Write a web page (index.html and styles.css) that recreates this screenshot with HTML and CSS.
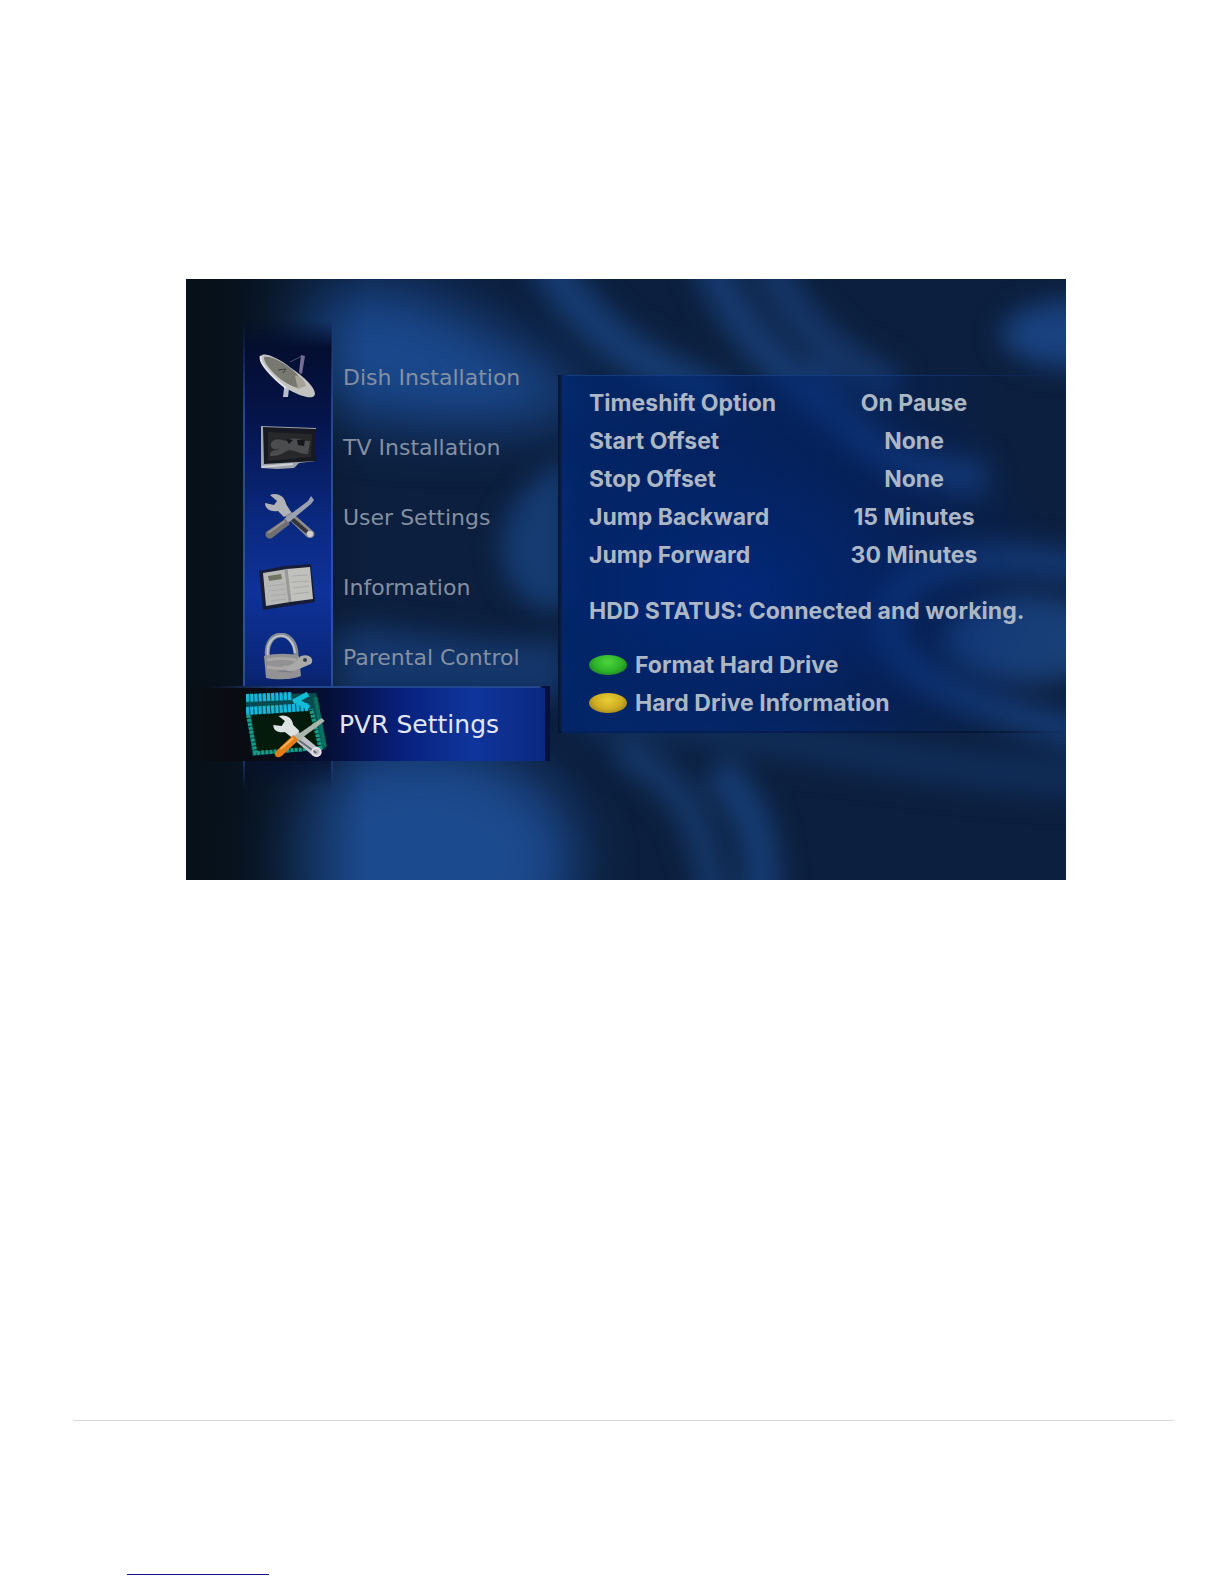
FILE: index.html
```html
<!DOCTYPE html>
<html lang="en">
<head>
    <meta charset="UTF-8">
    <meta name="viewport" content="width=device-width, initial-scale=1.0">
    <title>PVR Settings</title>
    <link rel="stylesheet" href="styles.css">
</head>
<body>
<main class="screen">
    <svg class="backdrop" viewBox="0 0 880 601" preserveAspectRatio="none" aria-hidden="true">
        <defs>
            <filter id="soft" x="-50%" y="-50%" width="200%" height="200%" color-interpolation-filters="sRGB"><feGaussianBlur stdDeviation="13"/></filter>
            <filter id="wide" x="-50%" y="-50%" width="200%" height="200%" color-interpolation-filters="sRGB"><feGaussianBlur stdDeviation="28"/></filter>
            <linearGradient id="shade">
                <stop offset="0" stop-color="#071017"/>
                <stop offset=".3" stop-color="#07111b" stop-opacity=".9"/>
                <stop offset="1" stop-color="#07111f" stop-opacity="0"/>
            </linearGradient>
        </defs>
        <rect width="880" height="601" fill="#0c1f3e"/>
        <!-- big glows -->
        <path d="M90 10H220C290 40 350 70 410 130C310 155 200 150 110 120Z" fill="#1a488c" filter="url(#wide)"/>
        <ellipse cx="235" cy="580" rx="155" ry="115" fill="#1c4a8e" filter="url(#wide)"/>
        <path d="M385 180C310 210 290 290 350 330H385Z" fill="#153b72" filter="url(#soft)"/>
        <path d="M140 350C220 340 280 370 380 360V420H140Z" fill="#14366a" filter="url(#soft)"/>
        <ellipse cx="890" cy="55" rx="75" ry="34" fill="#19427f" filter="url(#soft)"/>
        <!-- top streaks -->
        <g fill="none" filter="url(#soft)">
            <path d="M355-30C390 40 450 90 540 120" stroke="#163c72" stroke-width="40"/>
            <path d="M520-30C540 30 570 70 640 130" stroke="#163b70" stroke-width="36"/>
            <path d="M580-30C600 40 650 80 710 110" stroke="#153668" stroke-width="36"/>
            <path d="M620 90C660 160 700 190 800 200" stroke="#173c76" stroke-width="34"/>
        </g>
        <!-- lower swirls -->
        <g fill="none" filter="url(#soft)">
            <path d="M900 290C790 270 710 280 700 345C705 400 800 430 900 455" stroke="#153a73" stroke-width="32"/>
            <path d="M390 440C560 440 700 490 900 500" stroke="#102c57" stroke-width="40"/>
            <path d="M430 470C500 500 520 550 530 630" stroke="#15386a" stroke-width="30"/>
            <path d="M530 490C570 530 580 570 575 630" stroke="#163d74" stroke-width="36"/>
        </g>
        <ellipse cx="840" cy="360" rx="85" ry="44" fill="#1a4078" filter="url(#soft)"/>
        <rect width="180" height="601" fill="url(#shade)"/>
    </svg>

    <nav class="menu">
        <a class="menu-item" href="#">
            <span class="menu-icon">
                <svg width="60" height="48" viewBox="0 0 60 48">
                    <path d="M27 27l-2 17h5l2-17z" fill="#b9bfca"/>
                    <path d="M32 9l12-6-2 19" fill="none" stroke="#4d4a66" stroke-width="1"/>
                    <path d="M43 2l4 1-3 18-3-2z" fill="#756d94"/>
                    <path d="M3 3c-3 6 11 21 25 32 13 8 28 13 29 6 0-6-9-16-24-26C18 3 5-1 3 3z" fill="#c2c2c1"/>
                    <path d="M6 4c7-2 23 7 33 17 5 5 6 12 2 14C26 33 5 12 6 4z" fill="#777970"/>
                    <path d="M3 3c-3 6 11 21 25 32" fill="none" stroke="#e2e4e7" stroke-width="2"/>
                    <path d="M20 17l8-1-3 4" fill="none" stroke="#3d4143" stroke-width="1"/>
                    <path d="M37 23c4-2 9 4 11 10l-8 3z" fill="#a6a297"/>
                </svg>
            </span>
            Dish Installation
        </a>
        <a class="menu-item" href="#">
            <span class="menu-icon">
                <svg width="60" height="48" viewBox="0 0 60 48">
                    <path d="M3 3l55 2v33l-17 2-5 5-17 1-16-1z" fill="#9fa3ac"/>
                    <path d="M5 4l53 2v32L6 41z" fill="#171a20"/>
                    <path d="M10 9l44 2-1 23-43 4z" fill="#26282a"/>
                    <path d="M12 33c0-8 7-4 9-8-5 3-9 0-8-5 6-8 13 0 18-3 6-4 14 2 21 1l-2 13c-10 1-16-7-23-2-5 3-8 4-15 4z" fill="#4b4d4f"/>
                    <path d="M28 16l7 1-4 4zM39 17h8l-1 6-6-1z" fill="#15171c"/>
                    <path d="M4 4v40" stroke="#a2a9b7" stroke-width="2"/>
                    <path d="M4 44l31-3" stroke="#d0d2d6" stroke-width="2"/>
                </svg>
            </span>
            TV Installation
        </a>
        <a class="menu-item" href="#">
            <span class="menu-icon">
                <svg width="60" height="48" viewBox="0 0 60 48">
                    <path d="M25 21l6-4 25 22c2 4-3 8-7 5z" fill="#8d8d91"/>
                    <path d="M34 26l15 13" stroke="#34353a" stroke-width="4"/>
                    <path d="M12 2c8-3 15 2 16 9l5 8-7 5-6-6c-6 1-13-1-13-8l9 2 3-4z" fill="#b0b2b8"/>
                    <path d="M53 3l3 4-3 4-23 19-4-4L50 8z" fill="#9ba0b0"/>
                    <path d="M27 26l5 5-18 14c-4 2-8-2-6-6z" fill="#706f72"/>
                    <path d="M10 40l17-12" stroke="#98948f" stroke-width="2"/>
                    <circle cx="52" cy="41" r="3" fill="#d0d0d0"/>
                </svg>
            </span>
            User Settings
        </a>
        <a class="menu-item" href="#">
            <span class="menu-icon">
                <svg width="60" height="48" viewBox="0 0 60 48">
                    <path d="M1 8l26-5 26-2 4 38-26 4-26 4z" fill="#171d36"/>
                    <path d="M5 10l24-4 3 33-24 4z" fill="#b8b9b7"/>
                    <path d="M29 6l23-2 3 32-23 3z" fill="#c0c0bd"/>
                    <path d="M28 6l4 33" stroke="#999" stroke-width="3"/>
                    <path d="M10 13l13-2 1 5-13 2z" fill="#707462"/>
                    <path d="M10 23l17-2M11 28l17-2M12 33l16-2M13 38l15-2M34 13l16-1M34 19l17-1M35 25l16-2M36 31l15-2" stroke="#a8a9aa"/>
                </svg>
            </span>
            Information
        </a>
        <a class="menu-item" href="#">
            <span class="menu-icon">
                <svg width="60" height="48" viewBox="0 0 60 48">
                    <path d="M10 26C4-4 39-7 38 24" fill="none" stroke="#858b95" stroke-width="5"/>
                    <path d="M10 24C6-2 35-5 37 20" fill="none" stroke="#bfc4ca" stroke-width="2"/>
                    <path d="M6 23c11-3 27-3 35 0l2 20c-9 4-26 4-35 2z" fill="#929193"/>
                    <path d="M9 27c10-2 20-2 29 0M9 34c10 2 17 2 26 0" fill="none" stroke="#a9a6a5" stroke-width="3"/>
                    <path d="M25 33c11 1 13-7 18-10 8-3 14 3 10 8-6 2-16 8-23 7z" fill="#aaa9aa"/>
                    <circle cx="47" cy="27" r="2" fill="#353b4d"/>
                    <path d="M20 38l15 1" stroke="#7a7a84"/>
                </svg>
            </span>
            Parental Control
        </a>
        <a class="menu-item selected" href="#">
            <span class="menu-icon">
                <svg width="84" height="66" viewBox="2 0 80 66" preserveAspectRatio="none">
                    <path d="M1 3l68-2 9 56-70 7z" fill="#064b4d"/>
                    <path d="M7 23l58-5 7 38-61 4z" fill="#041b0c"/>
                    <path d="M4 23l7 38 62-5-9-39" fill="none" stroke="#159b87" stroke-width="4" stroke-dasharray="3 1"/>
                    <path d="M2 6l44-2M2 19l60-4" stroke="#16b6dc" stroke-width="8" stroke-dasharray="3 1"/>
                    <path d="M47 10l14-8M49 8l13 8" stroke="#13bdd7" stroke-width="5"/>
                    <path d="M68 5l9 50" stroke="#08705f" stroke-width="4"/>
                    <path d="M37 38l6-6 30 26c3 5-3 9-8 5z" fill="#bfc0c7"/>
                    <path d="M52 48l17 13" stroke="#667071" stroke-width="2"/>
                    <path d="M33 24c8-2 13 2 14 9l6 6-7 6-7-5c-6 1-11-1-11-7l8 1 3-5z" fill="#dce2e2"/>
                    <path d="M74 26l3 3-28 22-4-4z" fill="#aab5aa"/>
                    <path d="M47 43l5 5-16 16c-4 3-8 0-6-4z" fill="#e27b18"/>
                    <path d="M35 57l12-11" stroke="#ffad53" stroke-width="2"/>
                    <circle cx="69" cy="60" r="4" fill="none" stroke="#e7dfe8" stroke-width="2"/>
                </svg>
            </span>
            PVR Settings
        </a>
    </nav>

    <section class="panel">
        <table class="options">
            <tr><th scope="row">Timeshift Option</th><td>On Pause</td></tr>
            <tr><th scope="row">Start Offset</th><td>None</td></tr>
            <tr><th scope="row">Stop Offset</th><td>None</td></tr>
            <tr><th scope="row">Jump Backward</th><td>15 Minutes</td></tr>
            <tr><th scope="row">Jump Forward</th><td>30 Minutes</td></tr>
        </table>
        <p class="status">HDD STATUS: Connected and working.</p>
        <div class="actions">
            <button class="action" type="button"><span class="key green"></span>Format Hard Drive</button>
            <button class="action" type="button"><span class="key yellow"></span>Hard Drive Information</button>
        </div>
    </section>
</main>

<footer class="footer">
    <a class="footer-link" href="#"></a>
</footer>
</body>
</html>
```

FILE: styles.css
```css
* {
    margin: 0;
    padding: 0;
    box-sizing: border-box;
}

body {
    background: #fff;
    font-family: "DejaVu Sans", sans-serif;
}

.screen {
    position: relative;
    display: flex;
    align-items: flex-start;
    max-width: 880px;
    margin: 279px 158px 0 186px;
    padding: 41px 0 91px;
    overflow: hidden;
}

.backdrop {
    position: absolute;
    inset: 0;
    width: 100%;
    height: 100%;
}

/* left menu with the blue icon strip */
.menu {
    position: relative;
    flex: 0 0 364px;
    padding: 22px 0 28px;
    background:
        linear-gradient(transparent, #27478c 20%, #2c51a8 60%, #27478c 90%, transparent) 57px 0 / 2px 100% no-repeat,
        linear-gradient(transparent, #27478c 20%, #2c51a8 60%, #27478c 90%, transparent) 145px 0 / 2px 100% no-repeat,
        linear-gradient(rgba(4, 13, 48, 0), #040e30 6%, #051448 20%, #0a287e 42%, #0e329a 58%, #0a2678 75%, #050f30 90%, rgba(4, 13, 34, 0)) 57px 0 / 89px 100% no-repeat;
}

.menu-item {
    display: flex;
    align-items: center;
    gap: 11px;
    height: 70px;
    padding-left: 57px;
    color: #8490a2;
    font-size: 22px;
    text-decoration: none;
    white-space: nowrap;
}

.menu-icon {
    display: flex;
    flex: 0 0 89px;
    justify-content: center;
}

.menu-item.selected {
    gap: 7px;
    height: 75px;
    margin-top: -6px;
    border-top: 2px solid;
    border-right: 5px solid #05103c;
    border-image: linear-gradient(90deg, transparent 5%, #24468f 30%, #24468f 97%, #05103c 98%) 2 5 0 0;
    background: linear-gradient(90deg, rgba(10, 12, 16, 0), #0a0c11 10%, #090c14 22%, #050f38 40%, #08207c 60%, #0f359c 80%, #0a2880);
    color: #e2e6f4;
    font-size: 25px;
}

/* right panel */
.panel {
    position: relative;
    flex: 1;
    margin: 55px 0 0 8px;
    padding: 8px 0 9px 27px;
    border-top: 1px solid;
    border-left: 4px solid;
    border-bottom: 2px solid;
    border-image: linear-gradient(90deg, #061330, #143a80 2%, #143a80 60%, transparent) 1 0 0 4;
    background:
        radial-gradient(ellipse at 36% 60%, rgba(0, 46, 150, .5), rgba(0, 36, 115, .3) 40%, transparent 75%),
        linear-gradient(90deg, rgba(0, 38, 112, .75), rgba(0, 34, 106, .5) 50%, transparent 90%),
        linear-gradient(90deg, #07152e 80%, transparent) 0 100% / 100% 2px no-repeat border-box;
    color: #acb7c6;
    font-family: Inter, "Liberation Sans", sans-serif;
    font-size: 23px;
    font-weight: 700;
    line-height: 38px;
}

.options {
    border-collapse: collapse;
}

.options th {
    width: 230px;
    font-weight: inherit;
    text-align: left;
}

.options td {
    width: 190px;
    text-align: center;
}

.status {
    margin: 18px 0 16px;
}

.action {
    display: flex;
    align-items: center;
    gap: 8px;
    border: 0;
    background: none;
    color: inherit;
    font: inherit;
    cursor: pointer;
}

.key {
    width: 38px;
    height: 20px;
    border-radius: 50%;
}

.key.green {
    background: radial-gradient(ellipse at 50% 35%, #4cd53c, #2fb32a 50%, #106b1d);
}

.key.yellow {
    background: radial-gradient(ellipse at 50% 35%, #e8cd35, #cfae22 50%, #80681b);
}

.footer {
    height: 164px;
    margin: 540px 50px 0 73px;
    padding: 153px 0 0 54px;
    border-top: 1px solid #d8d8d8;
}

.footer-link {
    display: block;
    width: 142px;
    border-bottom: 1px solid #14148c;
}
```
